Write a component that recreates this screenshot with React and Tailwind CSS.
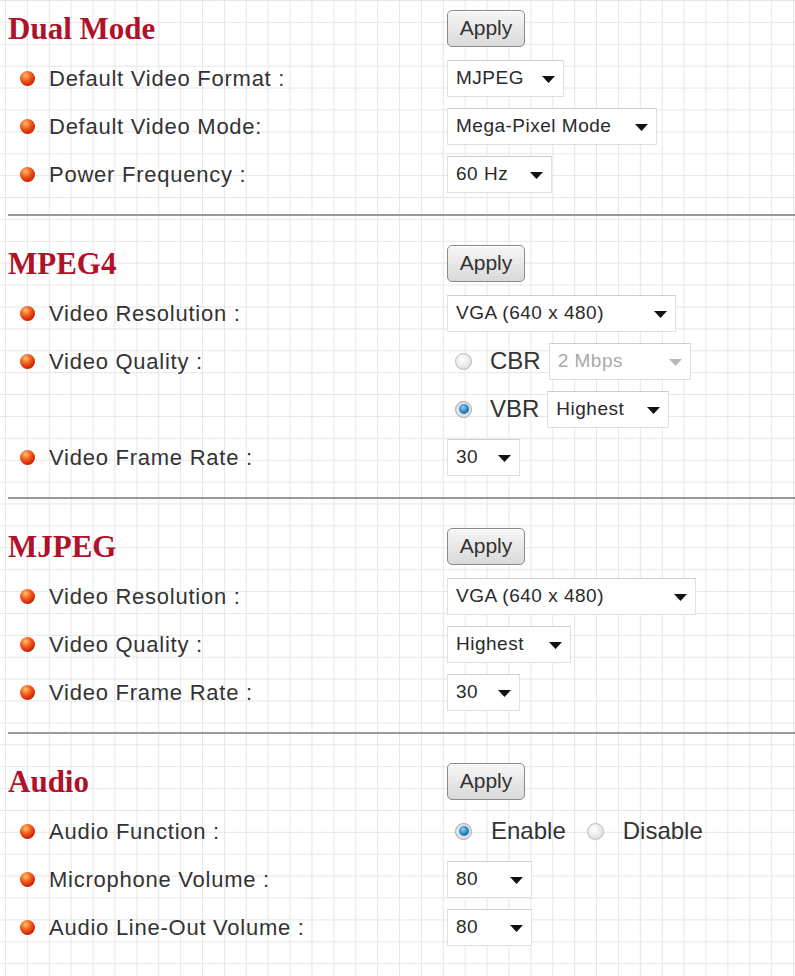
import React from "react";

const labelCls =
  "text-[22px] tracking-[0.75px] text-[#333] font-['Liberation_Sans',Arial,sans-serif]";

function Bullet() {
  return (
    <span className="inline-block size-[15px] shrink-0 rounded-full bg-[radial-gradient(circle_at_38%_30%,#ffc36a_0%,#f25a1c_38%,#cf2608_70%,#8a1200_100%)]" />
  );
}

function Caret({ disabled }) {
  return (
    <svg width="13" height="7" viewBox="0 0 13 7" className="mt-[2px] shrink-0">
      <polygon points="0,0 13,0 6.5,7" fill={disabled ? "#b8b8b8" : "#111"} />
    </svg>
  );
}

function Select({ value, className = "", disabled = false }) {
  return (
    <div
      className={`h-[37px] flex items-center justify-between bg-white border border-[#e0e0e0] border-t-[#cfcfcf] pl-[8px] pr-[8px] text-[19px] tracking-[0.5px] font-['Liberation_Sans',Arial,sans-serif] ${
        disabled ? "text-[#a9a9a9]" : "text-[#2a2a2a]"
      } ${className}`}
    >
      <span>{value}</span>
      <Caret disabled={disabled} />
    </div>
  );
}

function Radio({ checked }) {
  return checked ? (
    <span className="flex items-center justify-center size-[17px] shrink-0 rounded-full border border-[#a7a7a7] bg-[radial-gradient(circle,#f4f4f4_0%,#d6d6d6_100%)]">
      <span className="size-[10px] rounded-full bg-[radial-gradient(circle_at_40%_35%,#8fd0f5_0%,#2a84c6_50%,#0f4f86_100%)]" />
    </span>
  ) : (
    <span className="block size-[17px] shrink-0 rounded-full border border-[#b8b8b8] bg-[radial-gradient(circle_at_40%_35%,#ffffff_0%,#e6e6e6_60%,#cccccc_100%)]" />
  );
}

function ApplyButton() {
  return (
    <button className="w-[78px] h-[37px] rounded-[5px] border-[1.5px] border-[#8a8a8a] bg-[linear-gradient(to_bottom,#f7f7f7,#d9d9d9)] text-[21px] text-[#333] font-['Liberation_Sans',Arial,sans-serif] shadow-[inset_0_1px_0_#fff]">
      Apply
    </button>
  );
}

function Row({ label, children }) {
  return (
    <div className="h-[48px] flex items-center">
      <div className="w-[447px] flex items-center pl-[20px] gap-[14px]">
        {label ? (
          <>
            <Bullet />
            <span className={labelCls}>{label}</span>
          </>
        ) : null}
      </div>
      <div className="flex items-center">{children}</div>
    </div>
  );
}

function Section({ title, children, first, last }) {
  return (
    <section className={first ? "pt-[2px]" : "pt-[21px]"}>
      <div className="h-[52px] flex items-center">
        <h2 className="w-[447px] pl-[8px] text-[31px] leading-none font-bold text-[#b0122a] font-['Liberation_Serif','Times_New_Roman',serif]">
          {title}
        </h2>
        <ApplyButton />
      </div>
      {children}
      {!last && <div className="mt-[16px] ml-[8px] h-[2px] bg-[#9a9a9a]" />}
    </section>
  );
}

export default function App() {
  return (
    <div className="w-[795px] h-[976px] overflow-hidden bg-white bg-[linear-gradient(to_right,#e6e6e6_1px,transparent_1px),linear-gradient(to_bottom,#e6e6e6_1px,transparent_1px)] bg-[size:21.9px_21.9px] bg-[position:5px_0px]">
      <Section title="Dual Mode" first>
        <Row label="Default Video Format :">
          <Select value="MJPEG" className="w-[117px]" />
        </Row>
        <Row label="Default Video Mode:">
          <Select value="Mega-Pixel Mode" className="w-[210px]" />
        </Row>
        <Row label="Power Frequency :">
          <Select value="60 Hz" className="w-[105px]" />
        </Row>
      </Section>

      <Section title="MPEG4">
        <Row label="Video Resolution :">
          <Select value="VGA (640 x 480)" className="w-[229px]" />
        </Row>
        <Row label="Video Quality :">
          <div className="flex items-center ml-[8px]">
            <Radio />
            <span className="ml-[18px] text-[24px] text-[#333] font-['Liberation_Sans',Arial,sans-serif]">
              CBR
            </span>
            <Select value="2 Mbps" disabled className="ml-[8px] w-[142px]" />
          </div>
        </Row>
        <Row>
          <div className="flex items-center ml-[8px]">
            <Radio checked />
            <span className="ml-[18px] text-[24px] text-[#333] font-['Liberation_Sans',Arial,sans-serif]">
              VBR
            </span>
            <Select value="Highest" className="ml-[8px] w-[122px]" />
          </div>
        </Row>
        <Row label="Video Frame Rate :">
          <Select value="30" className="w-[73px]" />
        </Row>
      </Section>

      <Section title="MJPEG">
        <Row label="Video Resolution :">
          <Select value="VGA (640 x 480)" className="w-[249px]" />
        </Row>
        <Row label="Video Quality :">
          <Select value="Highest" className="w-[124px]" />
        </Row>
        <Row label="Video Frame Rate :">
          <Select value="30" className="w-[73px]" />
        </Row>
      </Section>

      <Section title="Audio" last>
        <Row label="Audio Function :">
          <div className="flex items-center ml-[8px] text-[24px] text-[#333] font-['Liberation_Sans',Arial,sans-serif]">
            <Radio checked />
            <span className="ml-[19px]">Enable</span>
            <span className="ml-[21px]">
              <Radio />
            </span>
            <span className="ml-[19px]">Disable</span>
          </div>
        </Row>
        <Row label="Microphone Volume :">
          <Select value="80" className="w-[85px]" />
        </Row>
        <Row label="Audio Line-Out Volume :">
          <Select value="80" className="w-[85px]" />
        </Row>
      </Section>
    </div>
  );
}
